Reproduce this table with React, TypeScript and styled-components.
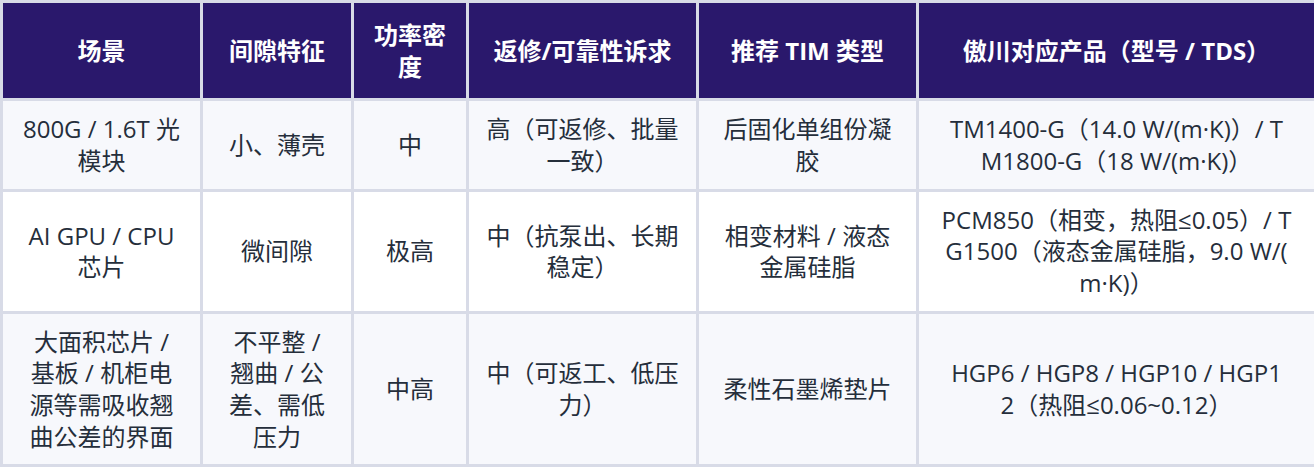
import * as React from "react";
import styled, { createGlobalStyle } from "styled-components";

const GlobalStyle = createGlobalStyle`
  html, body {
    margin: 0;
    padding: 0;
    background: #ffffff;
  }
  body {
    font-family: "Open Sans", "Noto Sans CJK SC", sans-serif;
  }
`;

type Row = {
  scene: string;
  gap: string;
  power: string;
  demand: string;
  tim: string;
  product: string;
};

const columns = [
  { title: "场景", width: 200 },
  { title: "间隙特征", width: 151 },
  { title: "功率密度", width: 115 },
  { title: "返修/可靠性诉求", width: 230 },
  { title: "推荐 TIM 类型", width: 220 },
  { title: "傲川对应产品（型号 / TDS）", width: 398 },
];

// product strings carry the line breaks seen in the source layout
const rows: Row[] = [
  {
    scene: "800G / 1.6T 光模块",
    gap: "小、薄壳",
    power: "中",
    demand: "高（可返修、批量一致）",
    tim: "后固化单组份凝胶",
    product: "TM1400-G（14.0 W/(m·K)）/ T\nM1800-G（18 W/(m·K)）",
  },
  {
    scene: "AI GPU / CPU 芯片",
    gap: "微间隙",
    power: "极高",
    demand: "中（抗泵出、长期稳定）",
    tim: "相变材料 / 液态金属硅脂",
    product: "PCM850（相变，热阻≤0.05）/ T\nG1500（液态金属硅脂，9.0 W/(\nm·K)）",
  },
  {
    scene: "大面积芯片 / 基板 / 机柜电源等需吸收翘曲公差的界面",
    gap: "不平整 / 翘曲 / 公差、需低压力",
    power: "中高",
    demand: "中（可返工、低压力）",
    tim: "柔性石墨烯垫片",
    product: "HGP6 / HGP8 / HGP10 / HGP1\n2（热阻≤0.06~0.12）",
  },
];

export default function App() {
  return (
    <>
      <GlobalStyle />
      <Table>
        <colgroup>
          {columns.map((c) => (
            <col key={c.title} style={{ width: c.width }} />
          ))}
        </colgroup>
        <thead>
          <tr>
            {columns.map((c) => (
              <HeadCell key={c.title}>{c.title}</HeadCell>
            ))}
          </tr>
        </thead>
        <tbody>
          {rows.map((r, i) => (
            <BodyRow key={r.scene} $shaded={i % 2 === 0}>
              <Cell>{r.scene}</Cell>
              <Cell>{r.gap}</Cell>
              <Cell>{r.power}</Cell>
              <Cell>{r.demand}</Cell>
              <Cell>{r.tim}</Cell>
              <ProductCell>{r.product}</ProductCell>
            </BodyRow>
          ))}
        </tbody>
      </Table>
    </>
  );
}

const Table = styled.table`
  width: 1314px;
  table-layout: fixed;
  border-collapse: collapse;
  font-size: 24px;
  line-height: 1.32;
  color: #252e3b;
`;

const HeadCell = styled.th`
  background: #2a186c;
  color: #ffffff;
  font-weight: 700;
  text-align: center;
  vertical-align: middle;
  padding: 16px;
  border: 3px solid #d8dbe7;
  word-break: break-all;
`;

const BodyRow = styled.tr<{ $shaded: boolean }>`
  background: ${(p) => (p.$shaded ? "#f7f8fc" : "#ffffff")};
`;

const Cell = styled.td`
  text-align: center;
  vertical-align: middle;
  padding: 12px 16px;
  border: 3px solid #d8dbe7;
  word-break: break-all;
`;

const ProductCell = styled(Cell)`
  white-space: pre-line;
  line-break: anywhere;
`;
